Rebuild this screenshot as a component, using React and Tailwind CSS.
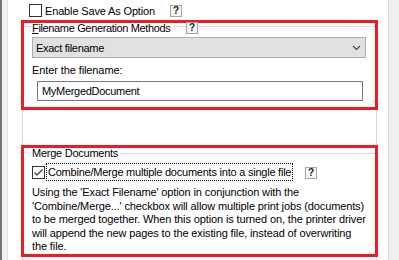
import React from "react";

function Help() {
  return (
    <div className="w-[12px] h-[12px] border border-[#a5a5a5] bg-[#f4f4f4] flex items-center justify-center text-[10px] font-bold leading-none text-[#222]">
      ?
    </div>
  );
}

export default function App() {
  return (
    <div className="w-[399px] h-[260px] flex bg-white overflow-hidden text-[11px] leading-[12px] text-black font-['Liberation_Sans',Arial,sans-serif]">
      <div className="w-[2px] bg-[#737373]" />
      <div className="w-[5px] bg-[#f0f0f0]" />
      <div className="w-[1px] bg-[#e2e2e2]" />
      <div className="w-[380px] flex flex-col">
        {/* Row 1 */}
        <div className="h-[20px] flex items-start pl-[21px] pt-[4px]">
          <div className="w-[13px] h-[13px] border border-[#333] bg-white shrink-0" />
          <span className="ml-[3px] w-[125px] whitespace-nowrap mt-[1px] tracking-[-0.15px]">Enable Save As Option</span>
          <div className="mt-[1px]">
            <Help />
          </div>
        </div>

        {/* Red box 1 */}
        <div className="ml-[13px] w-[357px] h-[90px] border-[3px] border-[#ed1c24] flex flex-col">
          <div className="flex items-start -mt-[1px] h-[12px]">
            <div className="w-[8px] h-px bg-[#dcdcdc] mt-[4px]" />
            <span className="w-[141px] whitespace-nowrap tracking-[-0.35px]">
              <span className="underline underline-offset-1">F</span>ilename Generation Methods
            </span>
            <div className="w-[13px] h-px bg-[#dcdcdc] mt-[4px]" />
            <Help />
            <div className="flex-1 h-px bg-[#dcdcdc] mt-[4px]" />
          </div>
          <div className="ml-[8px] mt-[3px] w-[334px] h-[21px] border border-[#adadad] bg-[#e1e1e1] flex items-center justify-between pl-[3px] pr-[4px]">
            <span className="whitespace-nowrap tracking-[-0.3px]">Exact filename</span>
            <svg width="9" height="6" viewBox="0 0 9 6" className="mt-[1px]">
              <polyline points="1,1 4.5,4.5 8,1" fill="none" stroke="#404040" strokeWidth="1.1" />
            </svg>
          </div>
          <div className="ml-[8px] mt-[6px] whitespace-nowrap tracking-[-0.1px]">Enter the filename:</div>
          <div className="ml-[13px] mt-[5px] w-[326px] h-[20px] border border-[#7a7a7a] bg-white flex items-center pl-[4px]">
            <span className="whitespace-nowrap tracking-[-0.3px]">MyMergedDocument</span>
          </div>
        </div>

        {/* Gap with outer group lines */}
        <div className="ml-[14px] w-[355px] h-[35px] border-x border-[#d9d9d9]" />

        {/* Red box 2 */}
        <div className="ml-[13px] w-[357px] h-[112px] border-[3px] border-[#ed1c24] flex flex-col">
          <div className="flex items-start -mt-[1px] h-[12px]">
            <span className="ml-[8px] whitespace-nowrap pr-[2px] tracking-[-0.25px]">Merge Documents</span>
            <div className="flex-1 h-px bg-[#dcdcdc] mt-[6px]" />
          </div>
          <div className="mt-[4px] ml-[8px] h-[18px] flex items-center">
            <div className="w-[13px] h-[13px] border border-[#333] bg-white shrink-0 flex items-center justify-center">
              <svg width="11" height="11" viewBox="0 0 11 11">
                <polyline points="1.5,5.5 4,8 9.5,2.5" fill="none" stroke="#444" strokeWidth="1.4" />
              </svg>
            </div>
            <div className="ml-[1px] h-[18px] w-[247px] border border-dotted border-black flex items-center pl-[1px] whitespace-nowrap tracking-[-0.23px]">
              Combine/Merge multiple documents into a single file
            </div>
            <div className="ml-[12px] mt-[2px]">
              <Help />
            </div>
          </div>
          <div className="mt-[5px] ml-[8px] leading-[13.5px] whitespace-nowrap tracking-[-0.12px]">
            Using the 'Exact Filename' option in conjunction with the
            <br />
            'Combine/Merge...' checkbox will allow multiple print jobs (documents)
            <br />
            to be merged together. When this option is turned on, the printer driver
            <br />
            will append the new pages to the existing file, instead of overwriting
            <br />
            the file.
          </div>
        </div>
        <div className="ml-[14px] w-[355px] flex-1 border-x border-[#d9d9d9]" />
      </div>
      <div className="w-[1px] bg-[#dadada]" />
      <div className="flex-1 bg-[#f0f0f0]" />
    </div>
  );
}
